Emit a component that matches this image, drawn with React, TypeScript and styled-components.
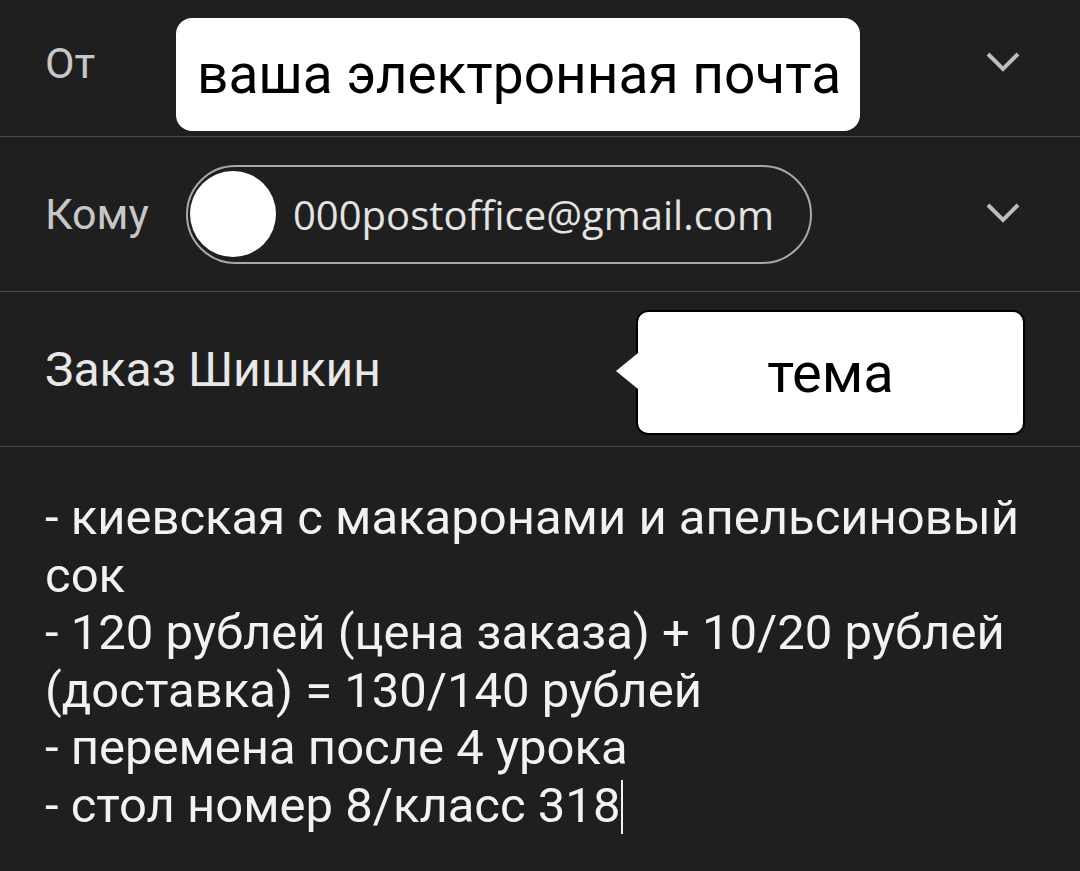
import React from "react";
import styled, { createGlobalStyle } from "styled-components";

const Global = createGlobalStyle`
  html, body { margin: 0; padding: 0; background: #1f1f1f; }
  body { font-family: Roboto, "Noto Sans", sans-serif; }
`;

const Screen = styled.div`
  width: 1080px;
  height: 871px;
  background: #1f1f1f;
  overflow: hidden;
  display: flex;
  flex-direction: column;
`;

const Row = styled.div<{ $h: number }>`
  height: ${(p) => p.$h}px;
  box-sizing: border-box;
  border-bottom: 1.5px solid #4a4a4a;
  display: flex;
  align-items: center;
  padding-left: 45px;
  position: relative;
  flex: none;
`;

const Label = styled.span<{ $top?: number }>`
  font-family: Roboto, sans-serif;
  font-size: 43px;
  color: #c7c7c7;
  width: 131px;
  flex: none;
  margin-top: ${(p) => p.$top ?? 0}px;
`;

const FromBox = styled.div`
  width: 684px;
  height: 113px;
  margin-top: 12px;
  background: #fff;
  border-radius: 16px;
  display: flex;
  align-items: center;
  padding-left: 21px;
  box-sizing: border-box;
  color: #000;
  font-family: Roboto, sans-serif;
  font-size: 55px;
  white-space: nowrap;
`;

const Chevron = styled.svg<{ $top: number }>`
  position: absolute;
  right: 60px;
  top: ${(p) => p.$top}px;
  width: 34px;
  height: 21px;
`;

const Chip = styled.div`
  margin-left: 10px;
  width: 626px;
  height: 99px;
  box-sizing: border-box;
  border: 2px solid #a9a9a9;
  border-radius: 50px;
  display: flex;
  align-items: center;
  padding-left: 2px;
  gap: 17px;
`;

const Avatar = styled.div`
  width: 86px;
  height: 86px;
  border-radius: 50%;
  background: #fff;
  flex: none;
`;

const Email = styled.span`
  font-family: "Open Sans", sans-serif;
  font-size: 40px;
  color: #e3e3e3;
  white-space: nowrap;
`;

const Subject = styled.span`
  font-family: Roboto, sans-serif;
  font-size: 48px;
  color: #e8e8e8;
  white-space: nowrap;
`;

const Bubble = styled.div`
  position: absolute;
  left: 636px;
  top: 18px;
  width: 389px;
  height: 125px;
  box-sizing: border-box;
  background: #fff;
  border: 2px solid #000;
  border-radius: 12px;
  display: flex;
  align-items: center;
  justify-content: center;
  font-family: Roboto, sans-serif;
  font-size: 56px;
  color: #000;
  &::before {
    content: "";
    position: absolute;
    left: -22px;
    top: 50%;
    margin-top: -20px;
    border-style: solid;
    border-width: 18px 22px 18px 0;
    border-color: transparent #fff transparent transparent;
  }
`;

const Body = styled.div`
  padding: 42px 0 0 45px;
  font-family: Roboto, sans-serif;
  font-size: 49px;
  line-height: 57.5px;
  color: #f2f2f2;
`;

const Line = styled.div`
  white-space: nowrap;
`;

const Caret = styled.span`
  display: inline-block;
  width: 2px;
  height: 54px;
  background: #f2f2f2;
  vertical-align: -12px;
  margin-left: 1px;
`;

const ChevronIcon = ({ top }: { top: number }) => (
  <Chevron $top={top} viewBox="0 0 34 21">
    <path d="M2 3 L17 18 L32 3" fill="none" stroke="#bdbdbd" strokeWidth="4" />
  </Chevron>
);

export default function App() {
  return (
    <>
      <Global />
      <Screen>
        <Row $h={137}>
          <Label $top={-11}>От</Label>
          <FromBox>ваша электронная почта</FromBox>
          <ChevronIcon top={51} />
        </Row>
        <Row $h={155}>
          <Label>Кому</Label>
          <Chip>
            <Avatar />
            <Email>000postoffice@gmail.com</Email>
          </Chip>
          <ChevronIcon top={65} />
        </Row>
        <Row $h={155}>
          <Subject>Заказ Шишкин</Subject>
          <Bubble>тема</Bubble>
        </Row>
        <Body>
          <Line>- киевская с макаронами и апельсиновый</Line>
          <Line>сок</Line>
          <Line>- 120 рублей (цена заказа) + 10/20 рублей</Line>
          <Line>(доставка) = 130/140 рублей</Line>
          <Line>- перемена после 4 урока</Line>
          <Line>
            - стол номер 8/класс 318<Caret />
          </Line>
        </Body>
      </Screen>
    </>
  );
}
